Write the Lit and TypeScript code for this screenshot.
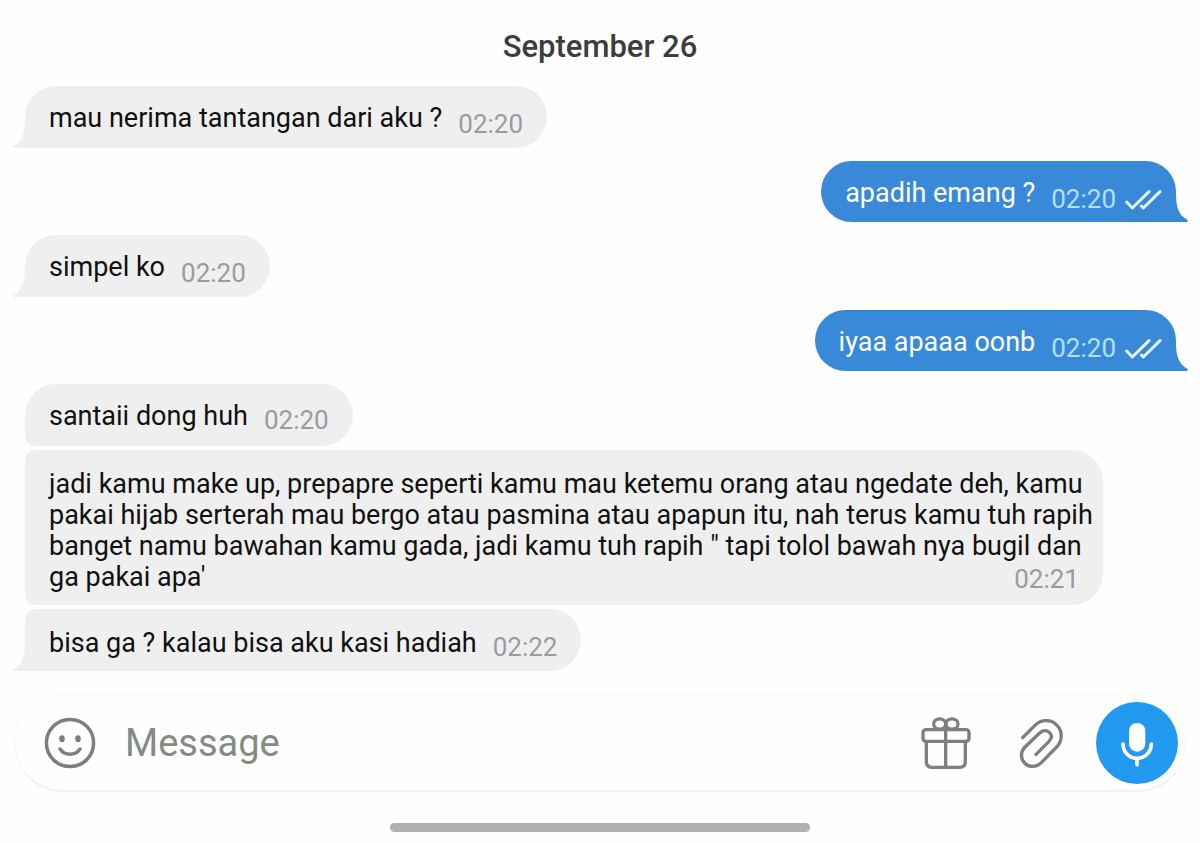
import { LitElement, html, css, nothing } from "lit";
import { customElement, property, state } from "lit/decorators.js";
import { classMap } from "lit/directives/class-map.js";

interface Message {
  text: string;
  time: string;
  out?: boolean;
  /** follows a message of the same sender */
  joined?: boolean;
  /** is followed by a message of the same sender */
  open?: boolean;
  long?: boolean;
}

const MESSAGES: Message[] = [
  { text: "mau nerima tantangan dari aku ?", time: "02:20" },
  { text: "apadih emang ?", time: "02:20", out: true },
  { text: "simpel ko", time: "02:20" },
  { text: "iyaa apaaa oonb", time: "02:20", out: true },
  { text: "santaii dong huh", time: "02:20", open: true },
  {
    text: "jadi kamu make up, prepapre seperti kamu mau ketemu orang atau ngedate deh, kamu pakai hijab serterah mau bergo atau pasmina atau apapun itu, nah terus kamu tuh rapih banget namu bawahan kamu gada, jadi kamu tuh rapih \" tapi tolol bawah nya bugil dan ga pakai apa'",
    time: "02:21",
    joined: true,
    open: true,
    long: true,
  },
  { text: "bisa ga ? kalau bisa aku kasi hadiah", time: "02:22", joined: true },
];

@customElement("chat-bubble")
export class ChatBubble extends LitElement {
  @property({ attribute: false }) message!: Message;

  static styles = css`
    :host {
      display: flex;
    }
    .bubble {
      position: relative;
      display: flex;
      gap: 16px;
      box-sizing: border-box;
      max-width: calc(100% - 73px);
      padding: 17px 24px 14px;
      border-radius: 31px 31px 31px 0;
      background: #efefef;
      color: #111;
      font-size: 27px;
      line-height: 31px;
    }
    .out {
      margin-left: auto;
      padding: 17px 14px 13px 24px;
      border-radius: 31px 31px 0 31px;
      background: #3889d8;
      color: #fff;
    }
    .joined {
      padding-top: 19px;
      padding-bottom: 12px;
      border-top-left-radius: 10px;
    }
    .open {
      border-bottom-left-radius: 10px;
    }
    .long {
      display: block;
      padding-right: 6px;
    }
    .text,
    .meta {
      margin: 0;
    }
    .meta {
      display: flex;
      align-items: center;
      gap: 9px;
      align-self: end;
      margin-bottom: -6px;
      color: #9a9b9f;
      font-size: 26px;
      white-space: nowrap;
    }
    .open .meta,
    .joined .meta {
      margin-bottom: -4px;
    }
    .long .text {
      display: inline;
    }
    .long .meta {
      float: right;
      margin: 2px 18px -2px 0;
    }
    .out .meta {
      color: #b4e0fb;
    }
    .ticks {
      width: 37px;
      height: 21px;
      fill: none;
      stroke: #e4f5ff;
      stroke-width: 9;
      stroke-linecap: round;
      stroke-linejoin: round;
    }
    .tail {
      position: absolute;
      left: -12px;
      bottom: 0;
      width: 13px;
      height: 28px;
      fill: #efefef;
    }
    .out .tail {
      left: auto;
      right: -12px;
      fill: #3889d8;
    }
  `;

  render() {
    const m = this.message;
    const classes = {
      bubble: true,
      out: !!m.out,
      joined: !!m.joined,
      open: !!m.open,
      long: !!m.long,
    };
    return html`
      <div class=${classMap(classes)}>
        <p class="text">${m.text}</p>
        <div class="meta">
          <time>${m.time}</time>
          ${m.out
            ? html`<svg class="ticks" viewBox="975 112 111 63" role="img" aria-label="Read">
                <path d="M980 151 997 169 1047 120M1024 163 1030 169 1080 120" />
              </svg>`
            : nothing}
        </div>
        ${m.open
          ? nothing
          : html`<svg class="tail" viewBox="0 0 13 28" aria-hidden="true">
              <path
                d=${m.out
                  ? "M0 0H1C1 11 3 21 12 25.500Q13.500 27 12 28H0Z"
                  : "M13 0H12C12 11 10 21 1 26Q-.500 27 1 28H13Z"}
              />
            </svg>`}
      </div>
    `;
  }
}

@customElement("chat-composer")
export class ChatComposer extends LitElement {
  @state() private draft = "";

  static styles = css`
    :host {
      display: block;
    }
    .bar {
      display: flex;
      align-items: center;
      box-sizing: border-box;
      height: 98px;
      padding: 0 7px 0 29px;
      border: 1px solid #f6f6f6;
      border-bottom: 2px solid #f2f2f2;
      border-radius: 49px;
      background: #fefefe;
    }
    button {
      display: flex;
      flex: none;
      padding: 0;
      border: 0;
      background: none;
      color: #7b7f82;
      cursor: pointer;
    }
    svg {
      fill: none;
      stroke: currentColor;
      stroke-linecap: round;
      stroke-linejoin: round;
    }
    .dot {
      fill: currentColor;
      stroke: none;
    }
    .smile {
      width: 52px;
      height: 52px;
    }
    .gift {
      width: 52px;
      height: 55px;
    }
    .clip {
      width: 48px;
      height: 54px;
    }
    .field {
      flex: 1;
      min-width: 0;
      margin: 0 24px 0 29px;
      padding: 0;
      border: 0;
      outline: 0;
      background: none;
      color: #222;
      font: 38px/46px Roboto, sans-serif;
    }
    .field::placeholder {
      color: #868a84;
      opacity: 1;
    }
    .actions {
      display: flex;
      align-items: center;
    }
    .attach {
      margin: 0 30px 0 46px;
    }
    .voice {
      border-radius: 50%;
      background: #2299f0;
      color: #fff;
    }
    .mic {
      width: 82px;
      height: 82px;
    }
  `;

  private onInput(e: Event) {
    this.draft = (e.target as HTMLInputElement).value;
  }

  render() {
    return html`
      <form class="bar" @submit=${(e: Event) => e.preventDefault()}>
        <button type="button" aria-label="Emoji">
          <svg class="smile" viewBox="0 0 52 52" stroke-width="3.5">
            <circle cx="26" cy="26" r="23.600" />
            <ellipse class="dot" cx="18" cy="21.800" rx="2.800" ry="3.500" />
            <ellipse class="dot" cx="34" cy="21.800" rx="2.800" ry="3.500" />
            <path d="M16 32C21 39 31 39 36 32" />
          </svg>
        </button>
        <input
          class="field"
          type="text"
          placeholder="Message"
          aria-label="Message"
          .value=${this.draft}
          @input=${this.onInput}
        />
        <div class="actions">
          <button type="button" aria-label="Send a gift">
            <svg class="gift" viewBox="92 107 156 165" stroke-width="10">
              <rect x="101" y="151" width="138" height="35" rx="9" />
              <path d="M111 187V247Q111 264 128 264H211Q228 264 228 247V187M169 146V264" />
              <ellipse cx="151" cy="134" rx="18" ry="15.500" />
              <ellipse cx="188" cy="134" rx="18" ry="15.500" />
            </svg>
          </button>
          <button class="attach" type="button" aria-label="Attach a file">
            <svg class="clip" viewBox="386 107 144 162" stroke-width="10">
              <path
                d="M400 172 437 135C456 116 487 117 503 135C520 152 520 182 502 200L456 247C441 262 419 262 406 248C393 235 393 215 407 200L451 158C460 149 472 149 480 156C488 164 488 174 479 183L440 222"
              />
            </svg>
          </button>
          <button class="voice" type="button" aria-label="Record a voice message">
            <svg class="mic" viewBox="617 65 246 246" stroke-width="11">
              <rect class="dot" x="716" y="128" width="49" height="86" rx="24" />
              <path d="M698 191C698 216 717 234 740 234S783 216 783 191M740 234V253" />
            </svg>
          </button>
        </div>
      </form>
    `;
  }
}

@customElement("app-root")
export class AppRoot extends LitElement {
  static styles = css`
    :host {
      display: block;
      font-family: Roboto, sans-serif;
      background: #fefefe;
    }
    .screen {
      display: flex;
      flex-direction: column;
      min-height: 100vh;
    }
    .date {
      margin: 29px 0 21px;
      color: #3d3d3d;
      font-size: 31px;
      font-weight: 500;
      line-height: 36px;
      text-align: center;
    }
    .messages {
      display: flex;
      flex-direction: column;
      gap: 13px;
      margin: 0;
      padding: 0 24px 0 25px;
      list-style: none;
    }
    .joined {
      margin-top: -9px;
    }
    .composer {
      margin: 23px 14px 0;
    }
    .home {
      width: 35%;
      height: 9px;
      margin: 31px auto 11px;
      border-radius: 5px;
      background: #b0b0b0;
    }
  `;

  render() {
    return html`
      <main class="screen">
        <h1 class="date">September 26</h1>
        <ol class="messages">
          ${MESSAGES.map(
            (m) => html`<li class=${classMap({ joined: !!m.joined })}>
              <chat-bubble .message=${m}></chat-bubble>
            </li>`
          )}
        </ol>
        <chat-composer class="composer"></chat-composer>
        <div class="home"></div>
      </main>
    `;
  }
}
